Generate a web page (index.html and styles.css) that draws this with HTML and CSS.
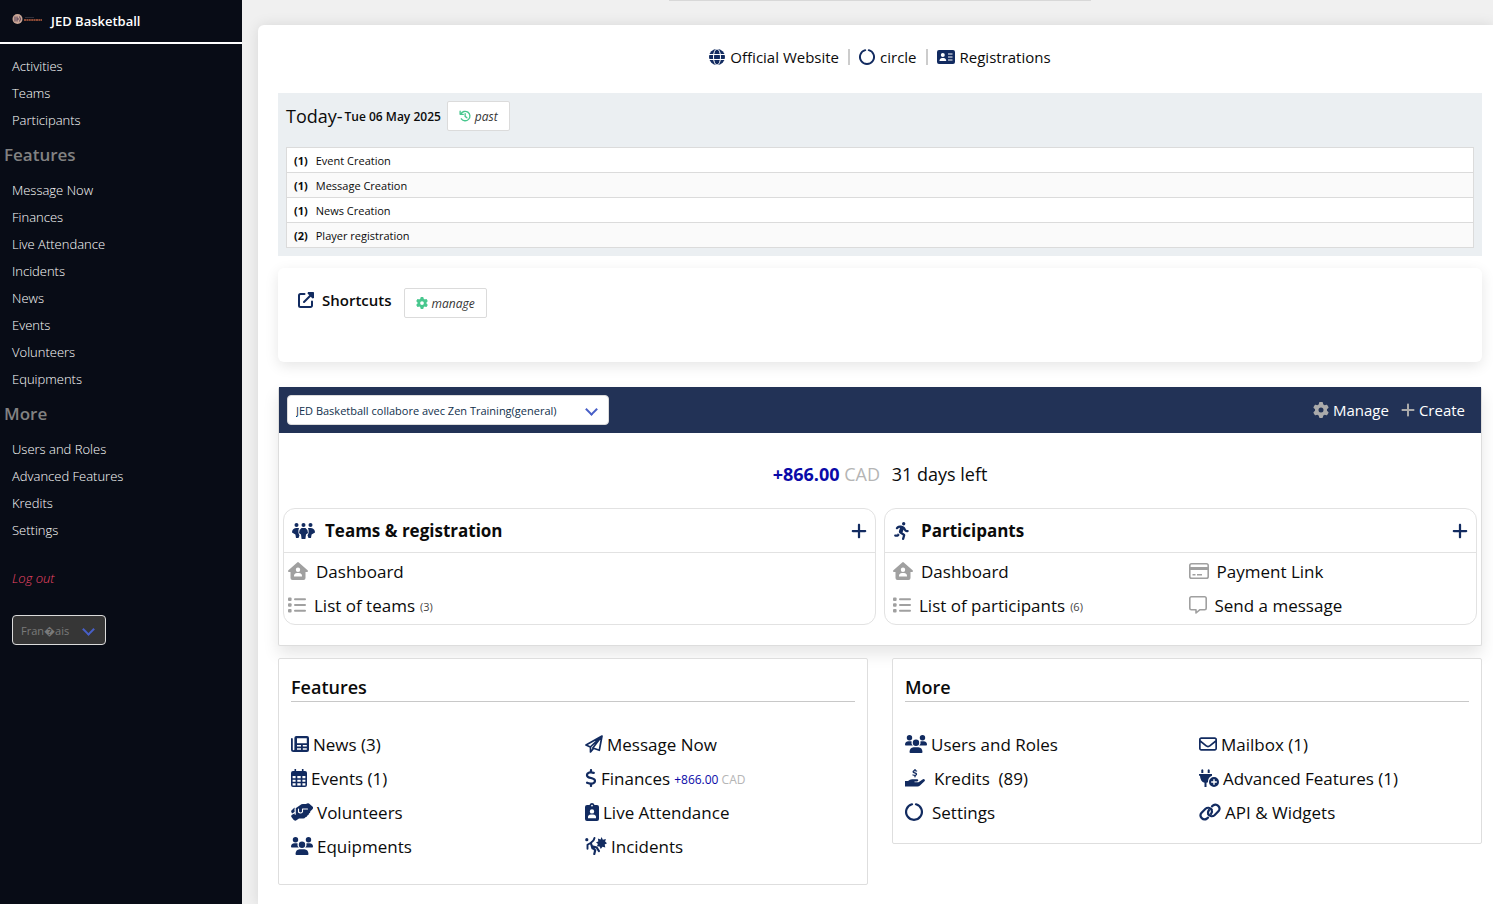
FILE: index.html
```html
<!DOCTYPE html>
<html lang="en">
<head>
    <meta charset="utf-8">
    <title>JED Basketball</title>
    <link rel="stylesheet" href="styles.css">
</head>
<body>
    <!-- icon sprite -->
    <svg class="sprite" aria-hidden="true">
        <symbol id="i-plus" viewBox="0 0 448 512"><path d="M256 80c0-17.700-14.300-32-32-32s-32 14.300-32 32V224H48c-17.700 0-32 14.300-32 32s14.300 32 32 32H192V432c0 17.700 14.300 32 32 32s32-14.300 32-32V288H400c17.700 0 32-14.300 32-32s-14.300-32-32-32H256V80z"/></symbol>
        <symbol id="i-gear" viewBox="0 0 512 512"><path d="M495.900 166.600c3.200 8.700 .5 18.400-6.400 24.600l-43.300 39.400c1.100 8.300 1.700 16.800 1.700 25.400s-.6 17.100-1.700 25.400l43.300 39.400c6.900 6.200 9.600 15.900 6.400 24.600c-4.400 11.900-9.700 23.300-15.800 34.300l-4.700 8.100c-6.600 11-14 21.400-22.100 31.200c-5.900 7.200-15.700 9.600-24.500 6.800l-55.700-17.700c-13.400 10.300-28.200 18.900-44 25.400l-12.500 57.100c-2 9.100-9 16.300-18.200 17.800c-13.800 2.300-28 3.500-42.500 3.500s-28.700-1.200-42.500-3.500c-9.200-1.500-16.200-8.700-18.200-17.800l-12.500-57.100c-15.800-6.500-30.600-15.100-44-25.400L83.100 425.900c-8.800 2.800-18.600 .3-24.500-6.800c-8.100-9.800-15.500-20.200-22.100-31.200l-4.700-8.100c-6.100-11-11.400-22.400-15.800-34.300c-3.200-8.700-.5-18.400 6.400-24.600l43.300-39.400C64.600 273.100 64 264.600 64 256s.6-17.100 1.700-25.400L22.400 191.200c-6.900-6.200-9.600-15.900-6.400-24.600c4.400-11.900 9.700-23.300 15.800-34.300l4.700-8.100c6.600-11 14-21.400 22.100-31.200c5.900-7.200 15.700-9.600 24.500-6.800l55.700 17.700c13.400-10.300 28.200-18.900 44-25.400l12.500-57.100c2-9.100 9-16.300 18.200-17.800C227.300 1.200 241.500 0 256 0s28.700 1.200 42.500 3.500c9.200 1.500 16.200 8.700 18.200 17.800l12.500 57.100c15.800 6.500 30.600 15.100 44 25.400l55.700-17.700c8.800-2.800 18.600-.3 24.500 6.800c8.100 9.800 15.500 20.200 22.100 31.200l4.700 8.100c6.100 11 11.400 22.400 15.800 34.300zM256 336a80 80 0 1 0 0-160 80 80 0 1 0 0 160z"/></symbol>
        <symbol id="i-globe" viewBox="0 0 16 16"><circle cx="8" cy="8" r="8"/><g fill="none" stroke="#fff" stroke-width="1"><ellipse cx="8" cy="8" rx="3.500" ry="8"/><path d="M0 5.500h16M0 10.500h16"/></g></symbol>
        <symbol id="i-circle" viewBox="0 0 18 18"><path d="M7 1.300a7.900 7.900 0 1 0 4 0" fill="none" stroke="currentColor" stroke-width="2.200" stroke-linecap="round"/></symbol>
        <symbol id="i-idcard" viewBox="0 0 18 14"><path fill-rule="evenodd" d="M2 0h14a2 2 0 0 1 2 2v10a2 2 0 0 1-2 2H2a2 2 0 0 1-2-2V2a2 2 0 0 1 2-2zM5.800 3a2 2 0 1 0 0 4 2 2 0 0 0 0-4zM2.500 11h6.700a2.600 2.600 0 0 0-2.600-3H5.100a2.600 2.600 0 0 0-2.600 3zM11 3.500v1h4.500v-1zM11 6.500v1h4.500v-1zM11 9.500v1h4.500v-1z"/></symbol>
        <symbol id="i-history" viewBox="0 0 16 16"><path d="M2.500 5.500a6.300 6.300 0 1 1 .6 6.200M1.500 1.500v4.300h4.300M8.200 4.800v3.700l2.300 1.900" fill="none" stroke="currentColor" stroke-width="1.800" stroke-linecap="round" stroke-linejoin="round"/></symbol>
        <symbol id="i-external" viewBox="0 0 16 16"><path d="M6.500 2H2.500A1.500 1.500 0 0 0 1 3.500v10A1.500 1.500 0 0 0 2.500 15h10a1.500 1.500 0 0 0 1.500-1.500v-4M6 10l8-8" fill="none" stroke="currentColor" stroke-width="2" stroke-linecap="round"/><path d="M10 0h5.200a.8.8 0 0 1 .8.800V6l-1.500.5-5-5z"/></symbol>
        <symbol id="i-teamgroup" viewBox="0 0 23 16"><circle cx="4.500" cy="2" r="2"/><circle cx="11.500" cy="2" r="2"/><circle cx="18.500" cy="2" r="2"/><path d="M4 5h3Q5.500 9 7.500 12.500L6.500 15H4l-.6-3.500L0 9.500Q0 5.500 4 5zM19 5h-3q1.500 4-.5 7.500l1 2.500H19l.6-3.500L23 9.500Q23 5.500 19 5z"/><path d="M9.500 5h4q2.500 1.500 2.500 5l-2 1.500-.6 4.500H9.600L9 11.500 7 10q0-3.500 2.500-5z"/></symbol>
        <symbol id="i-run" viewBox="0 0 448 512"><path d="M320 48a48 48 0 1 0 -96 0 48 48 0 1 0 96 0zM125.700 175.500c9.900-9.900 23.400-15.500 37.500-15.500c1.900 0 3.800 .1 5.600 .3L137.600 254c-9.300 28 1.700 58.800 26.800 74.500l86.200 53.900-25.400 88.800c-4.900 17 5 34.700 22 39.600s34.700-5 39.600-22l28.700-100.400c5.900-20.600-2.600-42.600-20.700-53.900L238 299l30.900-82.400 5.100 12.300C289 264.700 323.900 288 362.700 288H384c17.700 0 32-14.300 32-32s-14.300-32-32-32H362.700c-12.900 0-24.600-7.800-29.500-19.700l-6.300-15c-14.600-35.100-44.100-61.900-80.500-73.100l-48.700-15c-11.100-3.400-22.700-5.200-34.400-5.200c-31 0-60.800 12.300-82.700 34.300L57.400 153.400c-12.500 12.500-12.500 32.800 0 45.300s32.800 12.500 45.300 0l23.100-23.100zM91.200 352H32c-17.700 0-32 14.300-32 32s14.300 32 32 32h69.600c19 0 36.200-11.200 43.900-28.500L157 361.600l-9.500-6c-17.500-10.900-30.500-26.800-37.900-44.900L91.200 352z"/></symbol>
        <symbol id="i-house" viewBox="0 0 20 18"><path fill-rule="evenodd" d="M9.200.4a1.200 1.200 0 0 1 1.600 0l8.800 7.800c.8.800.3 1.800-.7 1.800h-1.400v6a2 2 0 0 1-2 2h-11a2 2 0 0 1-2-2v-6H1.100c-1 0-1.500-1-.7-1.800zM10 5.500a2.200 2.200 0 1 0 0 4.400 2.200 2.200 0 0 0 0-4.400zM6 14.500h8a3.300 3.300 0 0 0-3-3.500H9a3.300 3.300 0 0 0-3 3.500z"/></symbol>
        <symbol id="i-list" viewBox="0 0 18 16"><rect width="3.600" height="3.600" y=".5" rx="1"/><rect width="3.600" height="3.600" y="6.200" rx="1"/><rect width="3.600" height="3.600" y="11.900" rx="1"/><rect x="6" y="1.300" width="12" height="2" rx="1"/><rect x="6" y="7" width="12" height="2" rx="1"/><rect x="6" y="12.700" width="12" height="2" rx="1"/></symbol>
        <symbol id="i-card" viewBox="0 0 20 16"><rect x=".8" y=".8" width="18.400" height="14.400" rx="1.800" fill="none" stroke="currentColor" stroke-width="1.600"/><path d="M1 4h18v3H1zM3.500 11h3v1.400h-3zM8 11h5v1.400H8z"/></symbol>
        <symbol id="i-chat" viewBox="0 0 18 18"><path d="M2.300.8h13.400a1.500 1.500 0 0 1 1.500 1.500v9.900a1.500 1.500 0 0 1-1.500 1.500H11L7 17v-3.300H2.300a1.500 1.500 0 0 1-1.500-1.500V2.300A1.500 1.500 0 0 1 2.300.8z" fill="none" stroke="currentColor" stroke-width="1.600" stroke-linejoin="round"/></symbol>
        <symbol id="i-news" viewBox="0 0 18 16"><path fill-rule="evenodd" d="M5.500 0H16a2 2 0 0 1 2 2v12a2 2 0 0 1-2 2H2.500A2.500 2.500 0 0 1 0 13.500V3a.9.900 0 0 1 1.800 0v10.500a.8.800 0 0 0 1.600 0V2A2 2 0 0 1 5.500 0zM6 2.200v5h9.800v-5zM6 9v1.500h4V9zM11.800 9v1.500h4V9zM6 12.300v1.500h4v-1.500zM11.800 12.300v1.500h4v-1.500z"/></symbol>
        <symbol id="i-calendar" viewBox="0 0 16 18"><path fill-rule="evenodd" d="M3.500 0h1.600v2h5.800V0h1.600v2H14a2 2 0 0 1 2 2v12a2 2 0 0 1-2 2H2a2 2 0 0 1-2-2V4a2 2 0 0 1 2-2h1.500zM1.600 7v2.300h3V7zM6.300 7v2.300h3.400V7zM11.400 7v2.300h3V7zM1.600 10.700v2h3v-2zM6.300 10.700v2h3.400v-2zM11.400 10.700v2h3v-2zM1.600 14.200v2.200h3v-2.200zM6.300 14.200v2.200h3.400v-2.200zM11.400 14.200v2.200h3v-2.200z"/></symbol>
        <symbol id="i-hands" viewBox="0 0 22 18"><path d="M9 2.200Q10.300 1 12 1h3q1.500-1.200 3-.6L22 4q.3 1.800-1 2.700L19.300 8.300q.3 1.600-1.300 2.200 0 1.700-1.600 2-.4 1.600-2 1.700-.8 1.500-2.600 1.300H8L5 17.600Q3.300 18 2.300 16.600L.3 13.800Q-.2 12.500 1 11.700L4 10.200V6.800L5 5z"/><path d="M3.500 4.500L0 8l1 2.500 3-1.800z"/><path d="M7.500 6v3q2 2 4-.2V6h5M4.200 6.200v5" fill="none" stroke="#fff" stroke-width="1.100" stroke-linecap="round" stroke-linejoin="round"/></symbol>
        <symbol id="i-users" viewBox="0 0 22 18"><circle cx="4.500" cy="2.700" r="2.700"/><circle cx="17.500" cy="2.700" r="2.700"/><circle cx="11" cy="7.800" r="3.200"/><path d="M3.500 6.300h3q-.5 2.500 1.300 4.300H.8q-.8 0-.8-.8 0-3.500 3.500-3.500zM18.500 6.300h-3q.5 2.500-1.300 4.300h7q.8 0 .8-.8 0-3.500-3.500-3.500zM8.600 12.300h4.800q3.800.3 4.100 4.700 0 1-1 1h-11q-1 0-1-1 .3-4.400 4.100-4.700z"/></symbol>
        <symbol id="i-plane" viewBox="0 0 18 18"><path d="M17 1L1 10l4.300 2L17 1zM17 1L7.800 13l6.500 2.300zM5.500 12v5l3-3.500" fill="none" stroke="currentColor" stroke-width="1.700" stroke-linejoin="round"/></symbol>
        <symbol id="i-dollar" viewBox="0 0 320 512"><path d="M160 0c17.700 0 32 14.300 32 32V67.700c1.600 .2 3.100 .4 4.700 .7c.4 .1 .7 .1 1.100 .2l48 8.800c17.400 3.200 28.900 19.900 25.700 37.200s-19.900 28.900-37.200 25.700l-47.500-8.700c-31.300-4.600-58.900-1.500-78.300 6.200s-27.200 18.300-29 28.100c-2 10.700-.5 16.700 1.200 20.400c1.800 3.900 5.500 8.300 12.800 13.200c16.300 10.700 41.300 17.700 73.700 26.300l2.900 .8c28.600 7.600 63.600 16.800 89.600 33.800c14.200 9.300 27.600 21.900 35.900 39.500c8.500 17.900 10.300 37.900 6.400 59.200c-6.900 38-33.100 63.400-65.600 76.700c-13.700 5.600-28.600 9.200-44.400 11V480c0 17.700-14.300 32-32 32s-32-14.300-32-32V445.100c-.4-.1-.9-.1-1.300-.2l-.2 0 0 0c-24.400-3.800-64.500-14.300-91.500-26.300c-16.100-7.200-23.400-26.100-16.200-42.200s26.100-23.400 42.200-16.200c20.900 9.300 55.300 18.500 75.200 21.600c31.900 4.700 58.200 2 76-5.300c16.900-6.900 24.600-16.900 26.800-28.900c1.900-10.600 .4-16.700-1.300-20.400c-1.900-4-5.600-8.400-13-13.300c-16.400-10.700-41.500-17.700-74-26.300l-2.800-.7 0 0C119.400 279.300 84.400 270 58.400 253c-14.200-9.300-27.500-22-35.800-39.600c-8.400-17.900-10.100-37.900-6.100-59.200C23.700 116 52.300 91.200 84.800 78.300c13.300-5.300 27.900-8.900 43.200-11V32c0-17.700 14.300-32 32-32z"/></symbol>
        <symbol id="i-badge" viewBox="0 0 14 18"><path fill-rule="evenodd" d="M4.500 2Q5 0 7 0t2.500 2H12a2 2 0 0 1 2 2v12a2 2 0 0 1-2 2H2a2 2 0 0 1-2-2V4a2 2 0 0 1 2-2zM7 1.700A.9.900 0 1 0 7 3.500.9.900 0 0 0 7 1.700zM7 6.200a2.200 2.200 0 1 0 0 4.400 2.200 2.200 0 0 0 0-4.400zM3 15.200h8a3.200 3.200 0 0 0-3-3.600H6a3.200 3.200 0 0 0-3 3.600z"/></symbol>
        <symbol id="i-incident" viewBox="0 0 22 18"><circle cx="1.800" cy="2.700" r="1.600"/><path d="M9.500 1Q9 4 6 5.700L2.500 7.800v4" fill="none" stroke="currentColor" stroke-width="1.900" stroke-linecap="round" stroke-linejoin="round"/><path d="M6 6.500l1.500 4.800M8 11l2.200 2.300-.9 3.700M8 9.500l3.700 1 2.200 3.500" fill="none" stroke="currentColor" stroke-width="2.200" stroke-linecap="round" stroke-linejoin="round"/><path d="M16.500 0l1.400 2.700 3-.8-.8 2.600L22 6.200l-2.300 1.300.6 3-2.800-.8-1.700 2.300-1.200-2.500-2.700-.3 1-2.300-1.900-1.600 2.300-.8-.4-3 2.700 1z"/></symbol>
        <symbol id="i-handusd" viewBox="0 0 20 18"><path d="M0 12h3q2-1.800 4-1.800h5q1.300 0 1.300 1.100T12 12.500H9.500v.7h4l4-2.800q1.300-.7 2.100.2.800 1.100-.4 2L15 16.500Q14 17.500 12.500 17.500H0z"/><path d="M11.600 2Q9.900 1.300 8.800 1.800q-1.400 1 .3 1.900l1.300.4q1.900.8.400 2Q9.700 6.700 8 6M10 0v1.500M10 6.300v1.500" fill="none" stroke="currentColor" stroke-width="1.300" stroke-linecap="round"/></symbol>
        <symbol id="i-mail" viewBox="0 64 512 384"><path d="M64 112c-8.800 0-16 7.200-16 16v22.100L220.500 291.700c20.700 17 50.400 17 71.100 0L464 150.100V128c0-8.800-7.200-16-16-16H64zM48 212.200V384c0 8.800 7.200 16 16 16H448c8.800 0 16-7.200 16-16V212.200L322 328.800c-38.400 31.500-93.700 31.500-132 0L48 212.200zM0 128C0 92.700 28.700 64 64 64H448c35.300 0 64 28.700 64 64V384c0 35.300-28.700 64-64 64H64c-35.300 0-64-28.700-64-64V128z"/></symbol>
        <symbol id="i-plug" viewBox="0 0 20 18"><path d="M2.300.9Q3.300-.6 4.300.9V4h-2zM8.700.9q1-1.500 2 0V4h-2zM0 5h13v1.700Q8.700 8.500 9 13.300l-1.500.5V18h-2v-4.200Q1.300 12.500 1 7L0 6.500z"/><path fill-rule="evenodd" d="M15 8a5 5 0 1 0 0 10 5 5 0 0 0 0-10zm-.7 2.200h1.400v2.100h2.100v1.400h-2.100v2.100h-1.400v-2.100h-2.100v-1.400h2.100z"/></symbol>
        <symbol id="i-link" viewBox="0 0 22 18"><g fill="none" stroke="currentColor" stroke-width="2.200" stroke-linecap="round"><path d="M12.500 6.500a4 4 0 0 0-6-.7L2.400 9.900a4 4 0 0 0 5.600 5.600l1-.9"/><path d="M9.500 11.500a4 4 0 0 0 6 .7l4.100-4.100A4 4 0 0 0 14 2.500l-1 .9"/><path d="M12.500 6.500q1.200 2.300-.5 4.500M9.500 11.500Q8.300 9.200 10 7"/></g></symbol>
    </svg>

    <div class="layout">
        <aside class="sidebar">
            <a class="brand" href="#">
                <svg class="logo" viewBox="0 0 30 12" aria-hidden="true">
                    <circle cx="5.500" cy="6" r="5" fill="#c9a595"/>
                    <path d="M3 3.500v5M5 3.500v5M5 6h2M7.500 3.500q2 2.500 0 5" fill="none" stroke="#554058" stroke-width="1"/>
                    <path d="M13 4.500h9" stroke="#30303a" stroke-width="1"/>
                    <path d="M12 7h18" stroke="#8c4a35" stroke-width="2" stroke-dasharray="2 .4"/>
                </svg>
                <span>JED Basketball</span>
            </a>
            <nav class="menu">
                <a href="#">Activities</a>
                <a href="#">Teams</a>
                <a href="#">Participants</a>
                <h3>Features</h3>
                <a href="#">Message Now</a>
                <a href="#">Finances</a>
                <a href="#">Live Attendance</a>
                <a href="#">Incidents</a>
                <a href="#">News</a>
                <a href="#">Events</a>
                <a href="#">Volunteers</a>
                <a href="#">Equipments</a>
                <h3>More</h3>
                <a href="#">Users and Roles</a>
                <a href="#">Advanced Features</a>
                <a href="#">Kredits</a>
                <a href="#">Settings</a>
                <a class="logout" href="#">Log out</a>
            </nav>
            <div class="select lang">
                <select aria-label="Language"><option>Fran&#xFFFD;ais</option></select>
            </div>
        </aside>

        <main class="main">
            <div class="notice"></div>
            <div class="panel">
                <div class="top-links">
                    <a href="#"><svg class="icon w16"><use href="#i-globe"/></svg>Official Website</a>
                    <a href="#"><svg class="icon w16"><use href="#i-circle"/></svg>circle</a>
                    <a href="#"><svg class="icon w18"><use href="#i-idcard"/></svg>Registrations</a>
                </div>

                <section class="today">
                    <div class="today-head">
                        <span class="today-title">Today-</span>
                        <b>Tue 06 May 2025</b>
                        <button class="btn"><svg class="icon w12"><use href="#i-history"/></svg>past</button>
                    </div>
                    <table class="log">
                        <tr><td><b>(1)</b>Event Creation</td></tr>
                        <tr><td><b>(1)</b>Message Creation</td></tr>
                        <tr><td><b>(1)</b>News Creation</td></tr>
                        <tr><td><b>(2)</b>Player registration</td></tr>
                    </table>
                </section>

                <section class="shortcuts">
                    <svg class="icon w16"><use href="#i-external"/></svg>
                    <h4>Shortcuts</h4>
                    <button class="btn"><svg class="icon w12"><use href="#i-gear"/></svg>manage</button>
                </section>

                <section class="group">
                    <div class="group-head">
                        <div class="select season">
                            <select aria-label="Activity"><option>JED Basketball collabore avec Zen Training(general)</option></select>
                        </div>
                        <div class="group-actions">
                            <a href="#"><svg class="icon w16"><use href="#i-gear"/></svg>Manage</a>
                            <a href="#"><svg class="icon w14"><use href="#i-plus"/></svg>Create</a>
                        </div>
                    </div>
                    <div class="balance"><b>+866.00</b> <span class="cur">CAD</span> <span class="days">31 days left</span></div>
                    <div class="cards">
                        <div class="card">
                            <div class="card-head">
                                <svg class="icon w23"><use href="#i-teamgroup"/></svg>
                                <h3>Teams &amp; registration</h3>
                                <button class="add" aria-label="Add team"><svg class="icon w18"><use href="#i-plus"/></svg></button>
                            </div>
                            <div class="links">
                                <a href="#"><svg class="icon w20"><use href="#i-house"/></svg>Dashboard</a>
                                <a class="wide" href="#"><svg class="icon w18"><use href="#i-list"/></svg>List of teams <small>(3)</small></a>
                            </div>
                        </div>
                        <div class="card">
                            <div class="card-head">
                                <svg class="icon w18"><use href="#i-run"/></svg>
                                <h3>Participants</h3>
                                <button class="add" aria-label="Add participant"><svg class="icon w18"><use href="#i-plus"/></svg></button>
                            </div>
                            <div class="links split">
                                <a href="#"><svg class="icon w20"><use href="#i-house"/></svg>Dashboard</a>
                                <a href="#"><svg class="icon w20"><use href="#i-card"/></svg>Payment Link</a>
                                <a href="#"><svg class="icon w18"><use href="#i-list"/></svg>List of participants <small>(6)</small></a>
                                <a href="#"><svg class="icon w18"><use href="#i-chat"/></svg>Send a message</a>
                            </div>
                        </div>
                    </div>
                </section>

                <div class="boxes">
                    <section class="box tall">
                        <h3>Features</h3>
                        <div class="box-links">
                            <a href="#"><svg class="icon w18"><use href="#i-news"/></svg>News (3)</a>
                            <a href="#"><svg class="icon w18"><use href="#i-plane"/></svg>Message Now</a>
                            <a href="#"><svg class="icon w16"><use href="#i-calendar"/></svg>Events (1)</a>
                            <a href="#"><svg class="icon w12"><use href="#i-dollar"/></svg>Finances <small><span class="amount">+866.00</span> <span class="cur">CAD</span></small></a>
                            <a href="#"><svg class="icon w22"><use href="#i-hands"/></svg>Volunteers</a>
                            <a href="#"><svg class="icon w14"><use href="#i-badge"/></svg>Live Attendance</a>
                            <a href="#"><svg class="icon w22"><use href="#i-users"/></svg>Equipments</a>
                            <a href="#"><svg class="icon w22"><use href="#i-incident"/></svg>Incidents</a>
                        </div>
                    </section>
                    <section class="box">
                        <h3>More</h3>
                        <div class="box-links">
                            <a href="#"><svg class="icon w22"><use href="#i-users"/></svg>Users and Roles</a>
                            <a href="#"><svg class="icon w18"><use href="#i-mail"/></svg>Mailbox (1)</a>
                            <a class="spaced" href="#"><svg class="icon w20"><use href="#i-handusd"/></svg>Kredits &nbsp;(89)</a>
                            <a href="#"><svg class="icon w20"><use href="#i-plug"/></svg>Advanced Features (1)</a>
                            <a class="spaced" href="#"><svg class="icon w18"><use href="#i-circle"/></svg>Settings</a>
                            <a href="#"><svg class="icon w22"><use href="#i-link"/></svg>API &amp; Widgets</a>
                        </div>
                    </section>
                </div>
            </div>
        </main>
    </div>
</body>
</html>
```

FILE: styles.css
```css
* { box-sizing: border-box; }
body { margin: 0; font-family: "Open Sans", "Noto Sans", sans-serif; font-size: 18px; color: #0b0b0b; background: #f0f0f0; }
a { color: inherit; text-decoration: none; }
h3, h4 { margin: 0; font-weight: 600; }
button, select { font-family: inherit; cursor: pointer; }
.sprite { position: absolute; width: 0; height: 0; }
.icon { height: 18px; flex: none; fill: currentColor; color: #122b60; }
.w12 { width: 12px; }
.w14 { width: 14px; }
.w16 { width: 16px; }
.w18 { width: 18px; }
.w20 { width: 20px; }
.w22 { width: 22px; }
.w23 { width: 23px; }

.layout { display: flex; min-height: 100vh; }
.sidebar { flex: none; width: 242px; background: #080c16; color: #fff; font-size: 13px; }
.brand { display: flex; align-items: center; gap: 9px; height: 44px; padding: 0 12px; border-bottom: 2px solid #fff; font-weight: 600; }
.logo { width: 30px; height: 12px; margin-bottom: 4px; }
.menu { padding-top: 9px; }
.menu a { display: block; padding: 0 12px; line-height: 27px; font-weight: 300; }
.menu h3 { padding: 0 4px 2px; font-size: 17px; line-height: 41px; color: #828282; }
.menu .logout { margin-top: 21px; color: #f14668; font-style: italic; }

.select { position: relative; }
.select select { width: 100%; height: 30px; padding: 0 8px; appearance: none; border: 1px solid #dbdbdb; border-radius: 4px; font-size: 11px; }
.select::after { content: ""; position: absolute; right: 13px; top: 10px; width: 7px; height: 7px; border: solid #485fc7; border-width: 0 2px 2px 0; transform: rotate(45deg); pointer-events: none; }
.lang { width: 94px; margin: 23px 12px; }
.lang select { background: #363636; color: #7a7a7a; }

.main { flex: 1; min-width: 0; padding-left: 16px; }
.notice { height: 1px; margin: 0 11px 24px 20px; }
.notice::before { content: ""; display: block; width: 422px; height: 1px; margin: 0 auto; background: #d8d8d8; }
.panel { min-height: calc(100vh - 25px); padding: 20px 11px 20px 20px; background: #fff; border-radius: 6px 0 0 0; box-shadow: 0 0 14px rgba(0, 0, 0, .1); }

.top-links { display: flex; justify-content: center; font-size: 15px; line-height: 24px; }
.top-links a { display: flex; align-items: center; gap: 5px; }
.top-links a + a::before { content: ""; width: 2px; height: 16px; margin: 0 4px 0 9px; background: #ccc; }

.today { margin-top: 24px; padding: 8px; background: #ebeff2; }
.today-head { display: flex; align-items: center; gap: 2px; }
.today-title { font-size: 18px; }
.today-head b { font-size: 12px; font-weight: 600; }
.btn { display: inline-flex; align-items: center; gap: 4px; height: 30px; padding: 0 11px; background: #fff; border: 1px solid #dbdbdb; border-radius: 2px; font-size: 12px; font-style: italic; color: #363636; }
.today-head .btn { margin-left: 4px; }
.btn .icon { height: 12px; color: #48c78e; }
.log { width: 100%; margin-top: 16px; border-collapse: collapse; background: #fff; font-size: 11px; }
.log td { height: 25px; padding: 0 7px; border: 1px solid #dbdbdb; }
.log tr:nth-child(even) { background: #fafafa; }
.log b { margin-right: 8px; }

.shortcuts { display: flex; align-items: flex-start; gap: 8px; height: 94px; margin-top: 12px; padding: 20px; border-radius: 6px; box-shadow: 0 4px 14px rgba(0, 0, 0, .1); }
.shortcuts > .icon { height: 24px; }
.shortcuts h4 { font-size: 15px; line-height: 24px; }
.shortcuts .btn { margin-left: 4px; }

.group { margin-top: 25px; padding-bottom: 20px; border: 1px solid #ddd; border-top: 0; border-radius: 2px; background: #fff; box-shadow: 0 8px 16px rgba(0, 0, 0, .1); }
.group-head { display: flex; align-items: center; justify-content: space-between; height: 46px; padding: 0 16px 0 8px; background: #223256; color: #fff; }
.season { width: 322px; }
.season select { background: #fff; color: #10304c; }
.group-actions { display: flex; gap: 12px; font-size: 15px; }
.group-actions a { display: flex; align-items: center; gap: 4px; }
.group-actions .icon { height: 16px; color: #aaa; }
.balance { padding: 28px 0 20px; text-align: center; font-size: 18px; line-height: 27px; }
.balance b { color: #0a0aa8; font-weight: 700; }
.cur { color: #b5b5b5; }
.days { margin-left: 7px; }

.cards { display: flex; gap: 8px; padding: 0 4px; }
.card { flex: 1; height: 117px; border: 1px solid #e2e2e2; border-radius: 12px; }
.card-head { display: flex; align-items: center; gap: 10px; height: 44px; padding: 0 7px 0 8px; border-bottom: 1px solid #e2e2e2; }
.card-head h3 { flex: 1; font-size: 17px; font-weight: 700; }
.add { display: flex; padding: 0; border: 0; background: none; }
.links { display: grid; grid-template-columns: 1fr 1fr; padding: 1px 4px; }
.links.split { padding: 1px 0 1px 8px; column-gap: 8px; }
.links a { display: flex; align-items: center; gap: 8px; height: 34px; white-space: nowrap; font-size: 17px; }
.links .wide { grid-column: 1; }
.links .icon { color: #a0a0a0; }
.links small { margin-left: -3px; padding-top: 3px; font-size: 11px; color: #444; }

.boxes { display: flex; align-items: flex-start; gap: 24px; margin-top: 12px; }
.box { flex: 1; padding: 14px 12px; background: #fff; border: 1px solid #dedede; border-radius: 2px; }
.box.tall { padding-bottom: 21px; }
.box h3 { border-bottom: 1px solid #c8c8c8; font-size: 18px; line-height: 28px; }
.box-links { display: grid; grid-template-columns: 1fr 1fr; column-gap: 24px; margin-top: 25px; }
.box-links a { display: flex; align-items: center; gap: 4px; height: 34px; white-space: nowrap; font-size: 17px; }
.box-links .spaced { gap: 9px; }
.box-links small { padding-top: 3px; font-size: 12px; }
.amount { color: #0a0aa8; }
```
